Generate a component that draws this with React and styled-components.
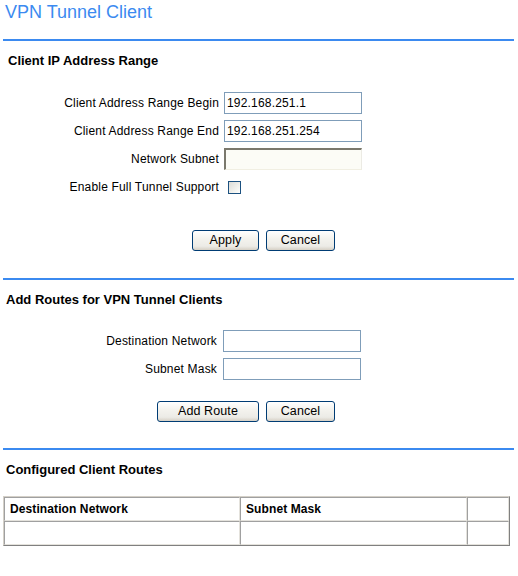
import React from 'react'
import styled, { createGlobalStyle } from 'styled-components'

const Global = createGlobalStyle`
    html, body {
        margin: 0;
        padding: 0;
        background: #ffffff;
    }
    body {
        font-family: "Liberation Sans", Arial, sans-serif;
        color: #000000;
    }
`

const BLUE = '#3b8af0'

const Page = styled.div`
    padding: 1px 4px 0 3px;
    width: 511px;
`

const Title = styled.h1`
    margin: 0;
    padding-left: 2px;
    font-size: 18px;
    line-height: 22px;
    font-weight: 400;
    color: ${BLUE};
`

const Section = styled.section`
    margin-top: ${p => p.$top}px;
    border-top: 2px solid ${BLUE};
    padding-top: 12px;
`

const Heading = styled.h2`
    margin: 0;
    padding-left: ${p => p.$indent || 3}px;
    font-size: 13px;
    line-height: 15px;
    font-weight: 700;
`

const FormGrid = styled.div`
    display: grid;
    grid-template-columns: ${p => p.$label}px 138px;
    column-gap: ${p => p.$gap}px;
    row-gap: 6px;
    margin-top: ${p => p.$top}px;
    align-items: center;
`

const Label = styled.label`
    justify-self: end;
    font-size: 12px;
    letter-spacing: 0.18px;
    line-height: 22px;
    white-space: nowrap;
`

const TextInput = styled.input`
    box-sizing: border-box;
    width: 138px;
    height: 22px;
    margin: 0;
    padding: 0 2px;
    border: 1px solid #7f9db9;
    background: #ffffff;
    font-family: "Liberation Sans", Arial, sans-serif;
    font-size: 12px;
    letter-spacing: 0.18px;
    color: #000000;
    outline: none;
`

const SunkenInput = styled(TextInput)`
    border-width: 2px 1px 1px 2px;
    border-style: solid;
    border-color: #7a786c #ecebe4 #f1efe2 #7a786c;
    background: #fcfcf6;
`

const CheckBox = styled.span`
    display: block;
    box-sizing: border-box;
    width: 13px;
    height: 13px;
    margin-left: 4px;
    border: 1px solid #1c5180;
    background: linear-gradient(135deg, #dcdcd7 0%, #f4f4f0 70%, #ffffff 100%);
`

const ButtonRow = styled.div`
    display: grid;
    grid-template-columns: 1fr 1fr;
    column-gap: 7px;
    padding-left: 8px;
    margin-top: ${p => p.$top}px;
    > :first-child {
        justify-self: end;
    }
`

const Button = styled.button`
    box-sizing: border-box;
    width: ${p => p.$w}px;
    height: 21px;
    margin: 0;
    padding: 0;
    border: 1px solid #003c74;
    border-radius: 3px;
    background: linear-gradient(#ffffff 0%, #f4f3ee 40%, #ecebe6 80%, #d6d0c5 100%);
    font-family: "Liberation Sans", Arial, sans-serif;
    font-size: 12.5px;
    letter-spacing: 0.1px;
    color: #000000;
    line-height: 19px;
`

const RouteTable = styled.table`
    margin-top: 19px;
    width: 507px;
    table-layout: fixed;
    border-collapse: separate;
    border-spacing: 0;
    border: 1px solid;
    border-color: #d4d0c8 #808080 #808080 #d4d0c8;
`

const Cell = styled.td`
    height: 22px;
    padding: 0 5px;
    border: 1px solid;
    border-color: #a0a0a0 #e4e2dc #e4e2dc #a0a0a0;
    font-size: 12px;
    font-weight: ${p => (p.$head ? 700 : 400)};
    letter-spacing: 0.1px;
    line-height: 22px;
    text-align: left;
    white-space: nowrap;
`

export default function App() {
    return (
        <Page>
            <Global />
            <Title>VPN Tunnel Client</Title>

            <Section $top={16}>
                <Heading $indent={5}>Client IP Address Range</Heading>
                <FormGrid $label={216} $gap={5} $top={24}>
                    <Label>Client Address Range Begin</Label>
                    <TextInput defaultValue="192.168.251.1" />
                    <Label>Client Address Range End</Label>
                    <TextInput defaultValue="192.168.251.254" />
                    <Label>Network Subnet</Label>
                    <SunkenInput defaultValue="" />
                    <Label>Enable Full Tunnel Support</Label>
                    <CheckBox />
                </FormGrid>
                <ButtonRow $top={32}>
                    <Button $w={67}>Apply</Button>
                    <Button $w={69}>Cancel</Button>
                </ButtonRow>
            </Section>

            <Section $top={27}>
                <Heading>Add Routes for VPN Tunnel Clients</Heading>
                <FormGrid $label={214} $gap={6} $top={23}>
                    <Label>Destination Network</Label>
                    <TextInput defaultValue="" />
                    <Label>Subnet Mask</Label>
                    <TextInput defaultValue="" />
                </FormGrid>
                <ButtonRow $top={21}>
                    <Button $w={102}>Add Route</Button>
                    <Button $w={69}>Cancel</Button>
                </ButtonRow>
            </Section>

            <Section $top={26}>
                <Heading>Configured Client Routes</Heading>
                <RouteTable>
                    <colgroup>
                        <col style={{ width: 236 }} />
                        <col style={{ width: 227 }} />
                        <col />
                    </colgroup>
                    <tbody>
                        <tr>
                            <Cell $head>Destination Network</Cell>
                            <Cell $head>Subnet Mask</Cell>
                            <Cell $head></Cell>
                        </tr>
                        <tr>
                            <Cell></Cell>
                            <Cell></Cell>
                            <Cell></Cell>
                        </tr>
                    </tbody>
                </RouteTable>
            </Section>
        </Page>
    )
}
